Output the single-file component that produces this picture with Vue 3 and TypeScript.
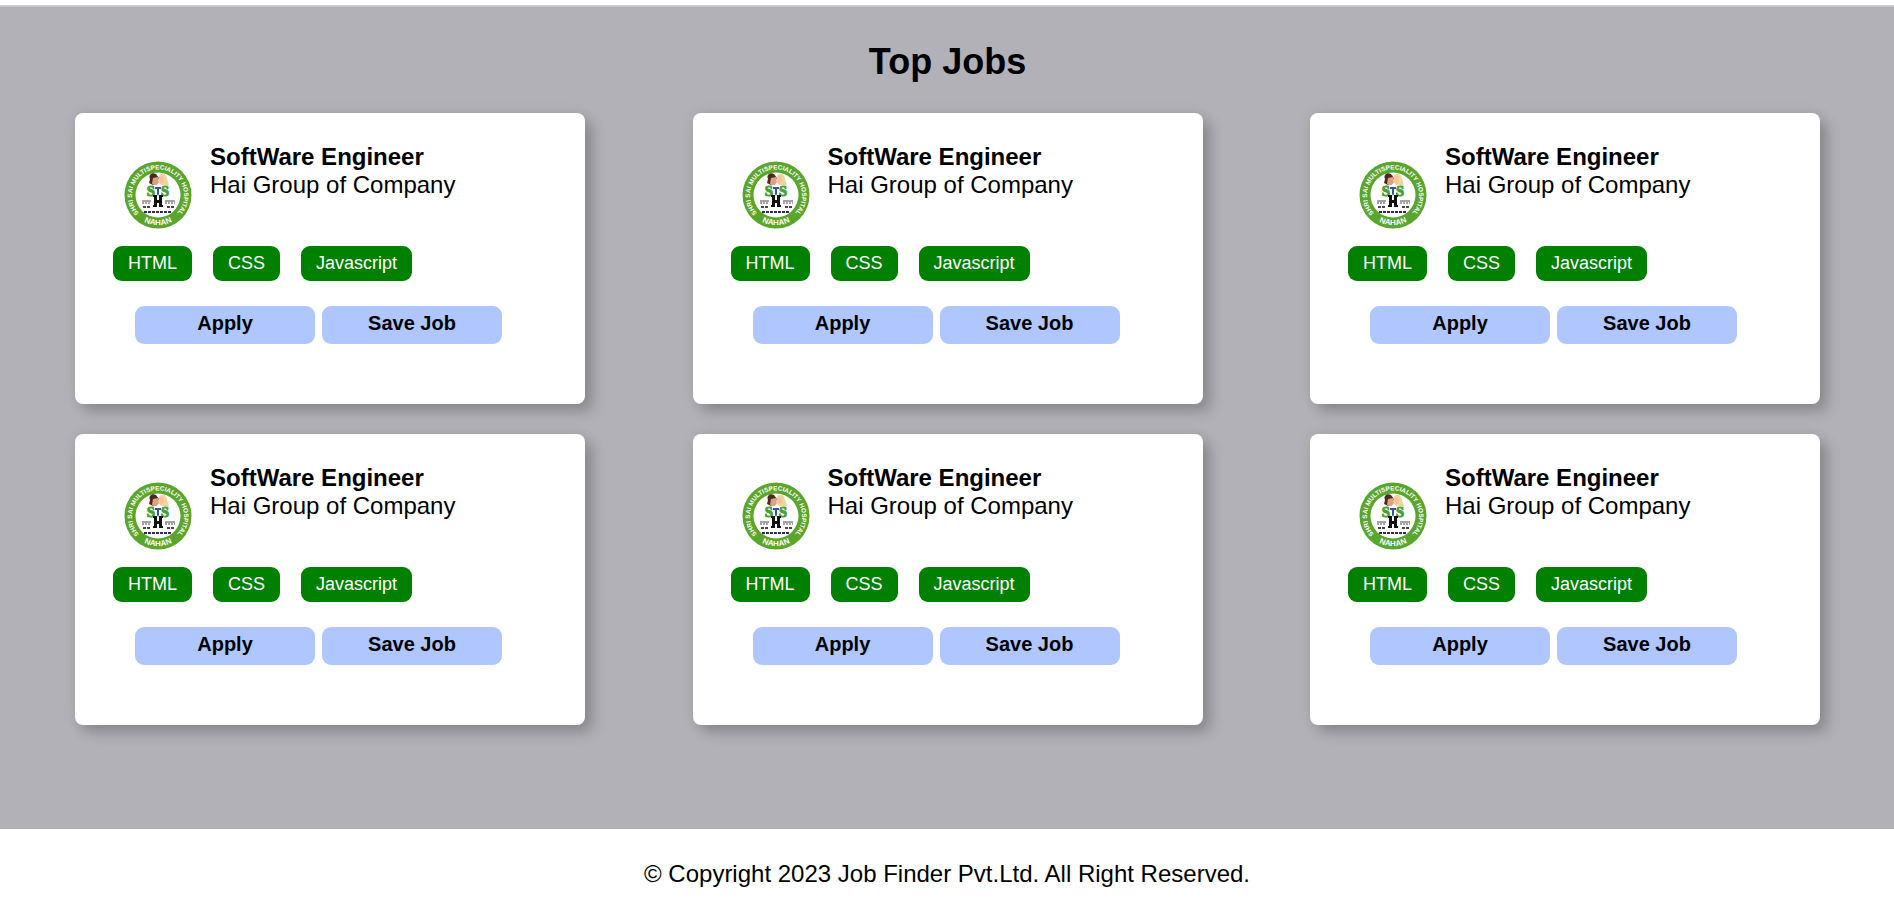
<script setup lang="ts">
interface Job {
  id: number
  title: string
  company: string
  skills: string[]
}

const jobs: Job[] = Array.from({ length: 6 }, (_, i) => ({
  id: i + 1,
  title: 'SoftWare Engineer',
  company: 'Hai Group of Company',
  skills: ['HTML', 'CSS', 'Javascript'],
}))
</script>

<template>
  <div class="page">
    <main class="jobs">
      <h1 class="heading">Top Jobs</h1>
      <div class="grid">
        <article v-for="job in jobs" :key="job.id" class="card">
          <div class="summary">
            <svg class="logo" viewBox="0 0 68 68" role="img" aria-label="Shri Sai Multispeciality Hospital, Nahan">
              <defs>
                <path :id="`arc-top-${job.id}`" d="M14 51A26 26 0 1 1 54 51" />
                <path :id="`arc-bottom-${job.id}`" d="M12 55A31 31 0 0 0 56 55" />
              </defs>
              <circle cx="34" cy="34" r="33.5" fill="#5aa52c" />
              <circle cx="34" cy="34" r="22.5" fill="#fff" />
              <g class="logo-ring" text-anchor="middle" fill="#fff">
                <text font-size="6.4">
                  <textPath :href="`#arc-top-${job.id}`" startOffset="50%">SHRI SAI MULTISPECIALITY HOSPITAL</textPath>
                </text>
                <text font-size="8">
                  <textPath :href="`#arc-bottom-${job.id}`" startOffset="50%">NAHAN</textPath>
                </text>
              </g>
              <path d="M32 13C28 11 24 14 26 18L25 22L29 24L34 22L35 17Z" fill="#4b2b20" />
              <path d="M29 17L34 16L35 21L32 25L28 23Z" fill="#dfa184" />
              <path d="M35 15C37 11 43 13 43 18L45 24H37L34 20Z" fill="#f1d59b" />
              <path d="M35 16L39 15L40 21L36 23Z" fill="#f4c1a4" />
              <g class="logo-letters" font-size="15" text-anchor="middle" fill="#4b9f38" stroke="#4b9f38">
                <text x="27" y="35">S</text>
                <text x="41" y="35">S</text>
              </g>
              <path d="M30 24H38L36 35H32Z" fill="#fff" />
              <path d="M31 26H37V28H35V33L34 35L33 33V28H31Z" fill="#38539a" />
              <path d="M29 34H33V39H35V34H39V36H38V44H39V46H35V42H33V46H29V44H30V36H29Z" fill="#111" />
              <g fill="none" stroke="#494949">
                <path d="M18 40H27M41 40H51" />
                <path d="M18 42H27M41 42H51" stroke-dasharray="2 1" />
                <path d="M19 46H26M43 46H50" stroke-width="2" stroke-dasharray="3 1" />
                <path d="M20 51H48" stroke="#302c5b" stroke-width="2" stroke-dasharray="3 1" />
              </g>
            </svg>
            <div class="details">
              <h2 class="title">{{ job.title }}</h2>
              <p class="company">{{ job.company }}</p>
            </div>
          </div>
          <ul class="skills">
            <li v-for="skill in job.skills" :key="skill" class="skill">{{ skill }}</li>
          </ul>
          <div class="actions">
            <button type="button" class="action">Apply</button>
            <button type="button" class="action">Save Job</button>
          </div>
        </article>
      </div>
    </main>
    <footer class="footer">© Copyright 2023 Job Finder Pvt.Ltd. All Right Reserved.</footer>
  </div>
</template>

<style>
body {
  margin: 0;
  background: #fff;
}
</style>

<style scoped>
.page {
  padding-top: 5px;
  font-family: "Liberation Sans", Arial, sans-serif;
  font-size: 24px;
  line-height: 28px;
  color: #000;
}

.jobs {
  padding: 34px 74px 104px 75px;
  border-top: 2px solid #cbcacd;
  background: #b2b1b7;
}

.heading {
  margin: 0 0 30px;
  font-size: 36px;
  line-height: 42px;
  text-align: center;
}

.grid {
  display: grid;
  grid-template-columns: repeat(3, 510px);
  justify-content: space-between;
  gap: 30px;
}

.card {
  box-sizing: border-box;
  padding: 30px 38px 60px;
  border-radius: 8px;
  background: #fff;
  box-shadow: 8px 8px 14px rgba(0, 0, 0, 0.2), 0 0 14px rgba(0, 0, 0, 0.08);
}

.summary {
  display: flex;
  gap: 18px;
  padding-left: 11px;
}

.logo {
  width: 68px;
  height: 68px;
  margin-top: 18px;
}

.logo-ring {
  font-weight: 700;
}

.logo-letters {
  font-family: "Liberation Serif", serif;
  font-weight: 700;
}

.title,
.company {
  margin: 0;
  font-size: 24px;
}

.company {
  font-weight: 400;
}

.skills {
  display: flex;
  gap: 21px;
  margin: 17px 0 25px;
  padding: 0;
  list-style: none;
}

.skill {
  padding: 7px 15px;
  border-radius: 9px;
  background: #008000;
  color: #fff;
  font-size: 18px;
  line-height: 21px;
}

.actions {
  display: flex;
  gap: 7px;
  padding-left: 22px;
}

.action {
  width: 180px;
  padding: 6px 0 9px;
  border: 0;
  border-radius: 9px;
  background: #afc6ff;
  color: #000;
  font: 700 20px/23px "Liberation Sans", Arial, sans-serif;
  cursor: pointer;
}

.footer {
  padding: 31px 16px 27px;
  text-align: center;
}
</style>
